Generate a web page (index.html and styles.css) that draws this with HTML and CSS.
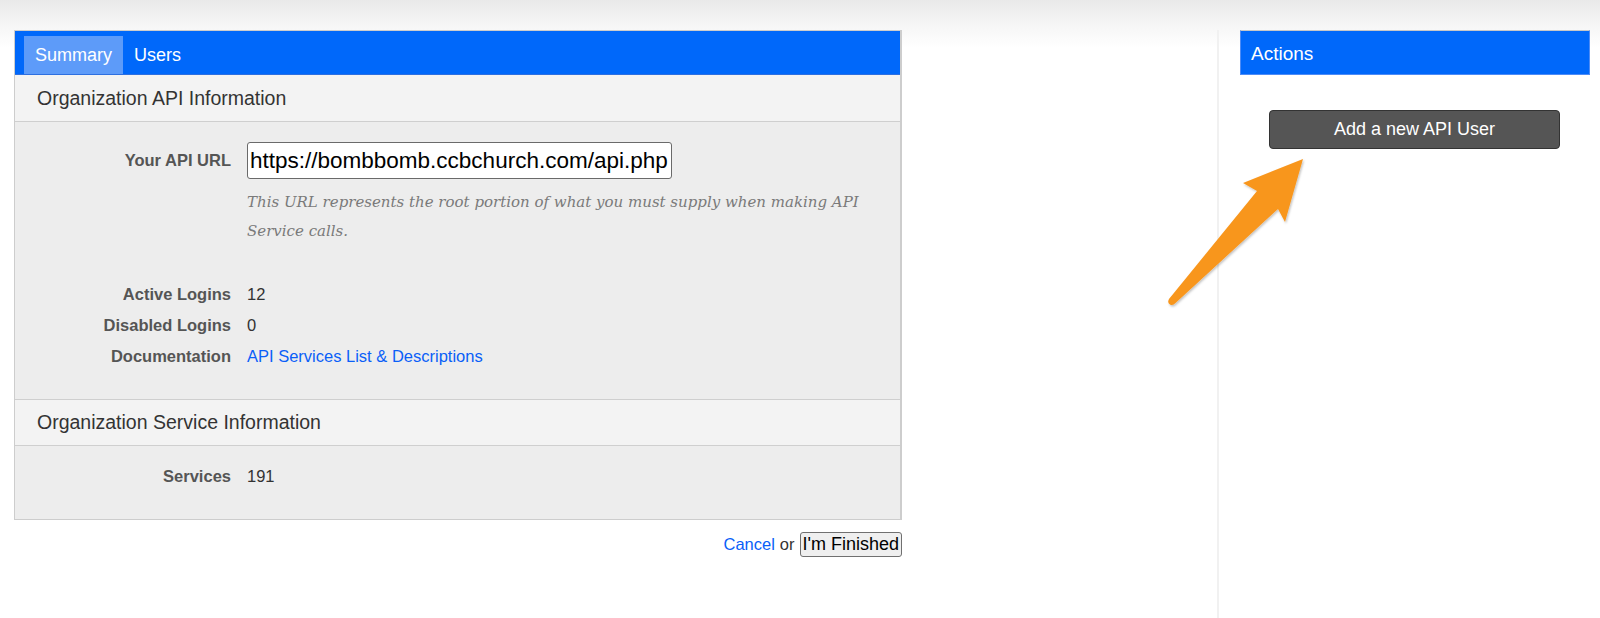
FILE: index.html
```html
<!DOCTYPE html>
<html lang="en">
<head>
<meta charset="utf-8">
<title>API Settings</title>
<link rel="stylesheet" href="styles.css">
</head>
<body>
<div class="page">
  <div class="main">
    <div class="panel">
      <div class="tabs">
        <a class="tab active">Summary</a>
        <a class="tab">Users</a>
      </div>
      <div class="section-head">Organization API Information</div>
      <div class="section-body api">
        <div class="field url-field">
          <div class="label">Your API URL</div>
          <div class="value">
            <input class="url-input" type="text" value="https://bombbomb.ccbchurch.com/api.php">
            <p class="help">This URL represents the root portion of what you must supply when making API<br>Service calls.</p>
          </div>
        </div>
        <div class="stats">
          <div class="field"><div class="label">Active Logins</div><div class="value">12</div></div>
          <div class="field"><div class="label">Disabled Logins</div><div class="value">0</div></div>
          <div class="field"><div class="label">Documentation</div><div class="value"><a class="link">API Services List &amp; Descriptions</a></div></div>
        </div>
      </div>
      <div class="section-head bordered">Organization Service Information</div>
      <div class="section-body services">
        <div class="field"><div class="label">Services</div><div class="value">191</div></div>
      </div>
    </div>
    <div class="footer">
      <a class="link">Cancel</a><span class="or">or</span><button class="finish">I'm Finished</button>
    </div>
  </div>
  <aside class="sidebar">
    <div class="side-panel">
      <div class="side-head">Actions</div>
      <button class="add-btn">Add a new API User</button>
    </div>
  </aside>
  <svg class="arrow" width="150" height="165" viewBox="0 0 150 165">
    <defs>
      <filter id="sh" x="-20%" y="-20%" width="140%" height="140%">
        <feDropShadow dx="1" dy="1.5" stdDeviation="1.2" flood-color="#000" flood-opacity="0.25"/>
      </filter>
    </defs>
    <path d="M143 9 L83 33 L97 41 L9 149 Q7 153 10 154.5 Q13 156 15.5 153 L118 59 L125 72 Z" fill="#f8961e" filter="url(#sh)"/>
  </svg>
</div>
</body>
</html>
```

FILE: styles.css
```css
* { box-sizing: border-box; }
html, body { margin: 0; padding: 0; }
body {
  font-family: "Liberation Sans", Arial, sans-serif;
  font-size: 16.5px;
  color: #333;
  background: #fff linear-gradient(to bottom, #e9e9e9 0px, #f7f7f7 28px, #ffffff 48px) no-repeat;
  min-height: 618px;
  overflow: hidden;
}
.page {
  position: relative;
  display: flex;
  align-items: flex-start;
  padding: 30px 0 0 14px;
  min-height: 618px;
}
.main { width: 888px; flex: none; }
.panel {
  border: 1px solid #cdcdcd;
  border-right-width: 2px;
  background: #ededed;
}
.tabs {
  display: flex;
  background: #0068fa;
  padding: 5px 0 0 9px;
  border-bottom: 1px solid #2d6fe0;
}
.tab {
  display: block;
  height: 38px;
  line-height: 38px;
  padding: 0 11px 0 11px;
  font-size: 18px;
  color: #fff;
}
.tab.active { background: #5d9bf9; width: 99px; padding-left: 11px; }
.section-head {
  height: 47px;
  line-height: 47px;
  padding-left: 22px;
  font-size: 19.5px;
  color: #333;
  background: #f3f3f3;
  border-bottom: 1px solid #cfcfcf;
}
.section-head.bordered { border-top: 1px solid #cfcfcf; height: 47px; line-height: 45px; }
.section-body.api { padding: 20px 0 27px; }
.section-body.services { padding: 15px 0 27px; }
.field {
  display: grid;
  grid-template-columns: 216px 1fr;
  column-gap: 16px;
  line-height: 31px;
}
.label {
  text-align: right;
  font-weight: bold;
  color: #555;
}
.value { color: #333; }
.url-field .label { line-height: 37px; }
.url-input {
  display: block;
  width: 425px;
  height: 37px;
  margin: 0;
  padding: 0 2px 0 2px;
  font-family: "Liberation Sans", Arial, sans-serif;
  font-size: 22.5px;
  color: #000;
  background: #fff;
  border: 1px solid #6a6a6a;
  border-radius: 3px;
}
.help {
  margin: 9px 0 0;
  font-family: "DejaVu Serif", Georgia, serif;
  font-style: italic;
  font-size: 15px;
  line-height: 29px;
  color: #7a7a7a;
}
.stats { margin-top: 33px; }
.link { color: #0a5ff8; text-decoration: none; }
.footer {
  display: flex;
  justify-content: flex-end;
  align-items: center;
  margin-top: 12px;
  font-size: 16.5px;
}
.or { margin: 0 5px; color: #333; }
.finish {
  height: 25px;
  padding: 0 2px;
  margin: 0;
  font-family: "Liberation Sans", Arial, sans-serif;
  font-size: 18px;
  color: #000;
  background: #efefef;
  border: 1px solid #707070;
  border-radius: 3px;
}
.sidebar {
  flex: none;
  margin-left: 315px;
  width: 373px;
  min-height: 588px;
  border-left: 2px solid #f1f1f1;
  padding-left: 21px;
}
.side-panel { width: 350px; }
.side-head {
  height: 45px;
  line-height: 45px;
  padding-left: 10px;
  font-size: 19px;
  color: #fff;
  background: #0068fa;
  border: 1px solid #4d8bf6;
  border-top-color: #c8c8c8;
}
.add-btn {
  display: block;
  width: 291px;
  height: 39px;
  margin: 35px 0 0 29px;
  font-family: "Liberation Sans", Arial, sans-serif;
  font-size: 18px;
  color: #fff;
  background: #555;
  border: 1px solid #333;
  border-radius: 4px;
}
.arrow {
  position: absolute;
  left: 1160px;
  top: 150px;
}
```
